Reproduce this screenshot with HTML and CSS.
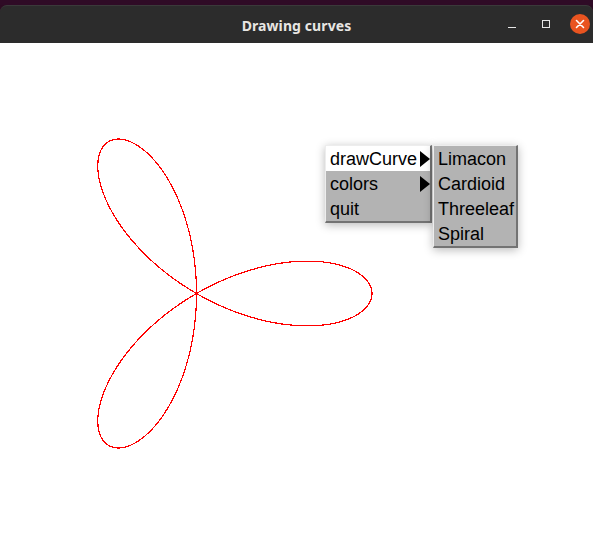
FILE: index.html
```html
<!DOCTYPE html>
<html>
<head>
<meta charset="utf-8">
<title>Drawing curves</title>
<link rel="stylesheet" href="styles.css">
</head>
<body>
<div class="screen">
  <div class="strip"></div>
  <div class="window">
    <div class="titlebar">
      <div class="title">Drawing curves</div>
      <div class="controls">
        <span class="btn min"><span class="min-line"></span></span>
        <span class="btn max"><span class="max-box"></span></span>
        <span class="btn close">
          <svg width="20" height="20" viewBox="0 0 20 20"><path d="M6.5 6.5 L13.5 13.5 M13.5 6.5 L6.5 13.5" stroke="#fff" stroke-width="1.6" stroke-linecap="round"/></svg>
        </span>
      </div>
    </div>
    <div class="canvas">
      <svg class="plot" width="593" height="496" viewBox="0 0 593 496">
        <path id="curve" class="curve" d="" fill="none" stroke="#ff0000" stroke-width="1.2"/>
      </svg>
      <div class="menu main-menu">
        <div class="item active"><span>drawCurve</span><span class="arrow"></span></div>
        <div class="item"><span>colors</span><span class="arrow"></span></div>
        <div class="item"><span>quit</span></div>
      </div>
      <div class="menu sub-menu">
        <div class="item"><span>Limacon</span></div>
        <div class="item"><span>Cardioid</span></div>
        <div class="item"><span>Threeleaf</span></div>
        <div class="item"><span>Spiral</span></div>
      </div>
    </div>
  </div>
</div>
<script src="script.js"></script>
</body>
</html>
```
FILE: styles.css
```css
html, body {
  margin: 0;
  padding: 0;
  background: #ffffff;
}
.screen {
  width: 593px;
  height: 539px;
  overflow: hidden;
  display: flex;
  flex-direction: column;
  background: #2c0b22;
}
.strip {
  height: 5px;
  flex: none;
  background: #2f0b26;
}
.window {
  flex: 1;
  display: flex;
  flex-direction: column;
}
.titlebar {
  height: 38px;
  flex: none;
  background: #2c2c2c;
  border-radius: 7px 7px 0 0;
  border-top: 1px solid #3a3a3a;
  box-sizing: border-box;
  display: flex;
  align-items: center;
  justify-content: center;
  position: relative;
}
.title {
  font-family: "Noto Sans", "DejaVu Sans", sans-serif;
  font-weight: bold;
  font-size: 14px;
  color: #e8e6e3;
  margin-top: 1px;
  letter-spacing: 0.1px;
}
.controls {
  position: absolute;
  right: 3px;
  top: 8px;
  display: flex;
  align-items: center;
  gap: 14px;
}
.btn {
  width: 20px;
  height: 20px;
  display: flex;
  align-items: center;
  justify-content: center;
}
.min-line {
  width: 8px;
  height: 1px;
  background: #e6e6e6;
  margin-top: 6px;
}
.max-box {
  width: 6px;
  height: 6px;
  border: 1px solid #e6e6e6;
}
.close {
  border-radius: 50%;
  background: #e95420;
}
.close svg {
  display: block;
}
.canvas {
  flex: 1;
  background: #ffffff;
  position: relative;
}
.plot {
  position: absolute;
  left: 0;
  top: 0;
}
.curve {
  shape-rendering: crispEdges;
}
.menu {
  position: absolute;
  background: #b3b3b3;
  border-top: 1px solid #ededed;
  border-left: 1px solid #ededed;
  border-right: 2px solid #737373;
  border-bottom: 2px solid #737373;
  box-shadow: 0 2px 9px rgba(0, 0, 0, 0.28);
  font-family: "Liberation Sans", Arial, sans-serif;
  font-size: 18px;
  color: #000;
  display: flex;
  flex-direction: column;
}
.main-menu {
  left: 325px;
  top: 102px;
  width: 104px;
}
.sub-menu {
  left: 433px;
  top: 102px;
  width: 82px;
}
.item {
  height: 25px;
  box-sizing: border-box;
  padding-top: 2px;
  display: flex;
  align-items: center;
  justify-content: space-between;
  padding-left: 4px;
  line-height: 23px;
}
.item.active {
  background: #ffffff;
}
.arrow {
  width: 0;
  height: 0;
  border-top: 8px solid transparent;
  border-bottom: 8px solid transparent;
  border-left: 10px solid #000;
  margin-right: 0;
  margin-top: -2px;
}
```
FILE: script.js
```js
(function () {
  var cx = 196.5, cy = 250.5, a = 175.5;
  var d = "";
  var n = 720;
  for (var i = 0; i <= n; i++) {
    var t = Math.PI * i / n;
    var r = a * Math.cos(3 * t);
    var x = cx + r * Math.cos(t);
    var y = cy - r * Math.sin(t);
    d += (i === 0 ? "M" : "L") + x.toFixed(2) + " " + y.toFixed(2) + " ";
  }
  document.getElementById("curve").setAttribute("d", d);
})();
```
